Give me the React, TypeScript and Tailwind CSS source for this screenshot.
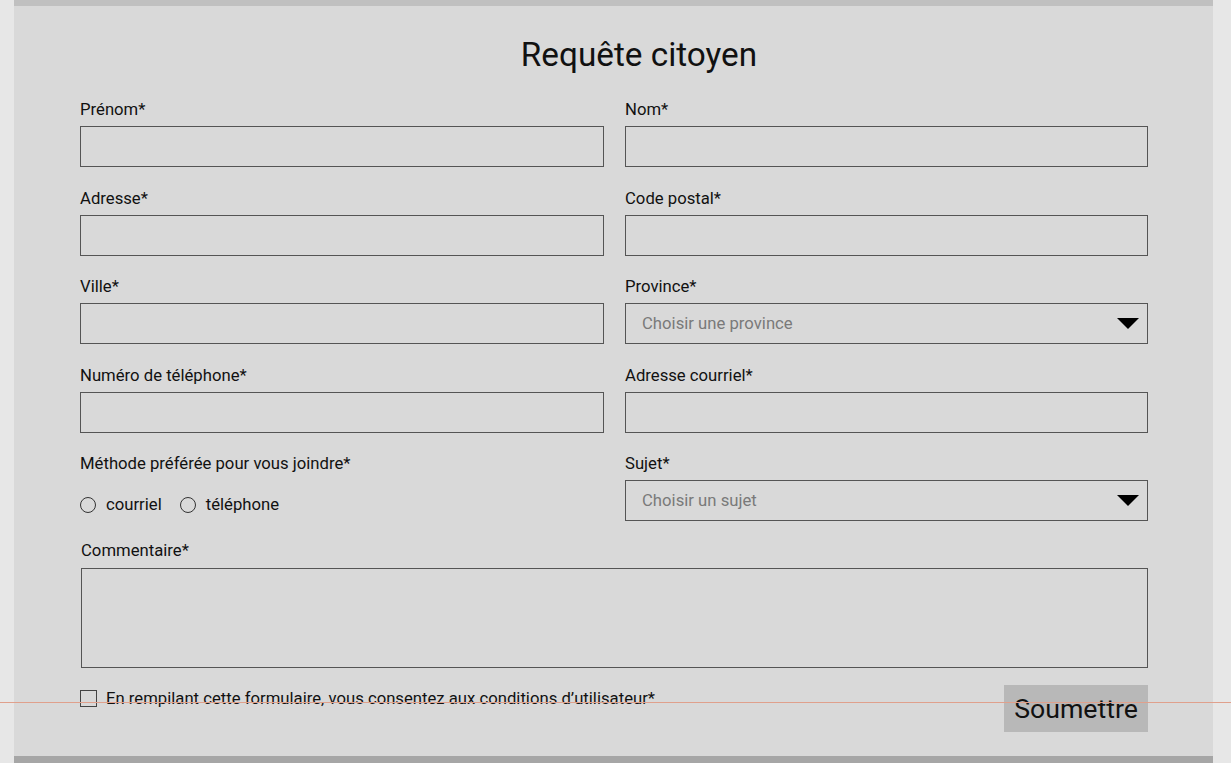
import React from "react"

function Field({ label, children }: { label: string; children: React.ReactNode }) {
  return (
    <div className="flex flex-col">
      <label className="text-[16.7px] leading-[19px] text-[#111]">{label}</label>
      <div className="mt-[7px]">{children}</div>
    </div>
  )
}

function TextBox() {
  return <input type="text" className="block h-[41px] w-full border border-[#555] bg-transparent px-4 outline-none" />
}

function SelectBox({ placeholder }: { placeholder: string }) {
  return (
    <div className="flex h-[41px] w-full items-center justify-between border border-[#555] pl-4 pr-[8px]">
      <span className="text-[16.7px] text-[#7a7a7a]">{placeholder}</span>
      <svg width="22" height="11" viewBox="0 0 22 11">
        <path d="M0 0 H22 L11 11 Z" fill="#000" />
      </svg>
    </div>
  )
}

function Radio({ label }: { label: string }) {
  return (
    <label className="flex items-center gap-[10px]">
      <span className="block h-[16px] w-[16px] rounded-full border border-[#333]" />
      <span className="text-[16.7px] leading-[19px] text-[#111]">{label}</span>
    </label>
  )
}

export default function App() {
  return (
    <div className="relative h-[763px] w-full overflow-hidden bg-[#e7e7e7] font-['Roboto',sans-serif]">
      <div className="ml-[14px] flex h-[763px] w-[1199px] flex-col bg-[#d9d9d9]">
        <div className="h-[6px] bg-[#c0c0c0]" />
        <div className="flex-1">
          <h1 className="pt-[30px] pl-[51px] text-center text-[33.3px] leading-[38px] text-[#111]">Requête citoyen</h1>

          <form className="ml-[66px] mt-[26px] w-[1068px]">
            <div className="grid grid-cols-[524px_523px] gap-x-[21px] gap-y-[21.5px]">
              <Field label="Prénom*">
                <TextBox />
              </Field>
              <Field label="Nom*">
                <TextBox />
              </Field>
              <Field label="Adresse*">
                <TextBox />
              </Field>
              <Field label="Code postal*">
                <TextBox />
              </Field>
              <Field label="Ville*">
                <TextBox />
              </Field>
              <Field label="Province*">
                <SelectBox placeholder="Choisir une province" />
              </Field>
              <Field label="Numéro de téléphone*">
                <TextBox />
              </Field>
              <Field label="Adresse courriel*">
                <TextBox />
              </Field>
              <div className="flex flex-col">
                <span className="text-[16.7px] leading-[19px] text-[#111]">Méthode préférée pour vous joindre*</span>
                <div className="mt-[22px] flex items-center gap-[18px]">
                  <Radio label="courriel" />
                  <Radio label="téléphone" />
                </div>
              </div>
              <Field label="Sujet*">
                <SelectBox placeholder="Choisir un sujet" />
              </Field>
            </div>

            <div className="mt-[20px] ml-[1px] flex flex-col">
              <label className="text-[16.7px] leading-[19px] text-[#111]">Commentaire*</label>
              <textarea className="mt-[8px] block h-[100px] w-full resize-none border border-[#555] bg-transparent outline-none" />
            </div>

            <div className="mt-[17px] flex items-start justify-between">
              <label className="mt-[4px] flex items-center gap-[9px]">
                <span className="block h-[17px] w-[17px] border border-[#444]" />
                <span className="text-[16.7px] leading-[19px] text-[#111]">
                  En rempilant cette formulaire, vous consentez aux conditions d’utilisateur*
                </span>
              </label>
              <button type="button" className="h-[47px] w-[144px] bg-[#b8b8b8] text-[26.7px] leading-[30px] text-[#111]">
                Soumettre
              </button>
            </div>
          </form>
        </div>
        <div className="h-[7px] bg-[#a6a6a6]" />
      </div>
      <div className="pointer-events-none absolute left-0 right-0 top-[702px] h-px bg-[#e0a08c]" />
    </div>
  )
}
